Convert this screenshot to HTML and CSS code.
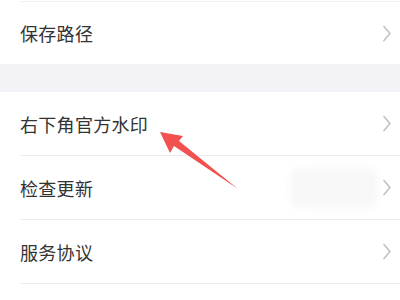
FILE: index.html
```html
<!DOCTYPE html>
<html lang="zh-CN">
<head>
<meta charset="utf-8">
<link rel="stylesheet" href="styles.css">
</head>
<body>
<div class="page">
  <div class="group first">
    <div class="row">
      <span class="label">保存路径</span>
      <svg class="chev" width="10" height="17" viewBox="0 0 10 17"><path d="M2 1.5 L8 8.5 L2 15.5" fill="none" stroke="#c4c4c4" stroke-width="1.7" stroke-linecap="round" stroke-linejoin="round"/></svg>
    </div>
  </div>
  <div class="band"></div>
  <div class="group">
    <div class="row bordered">
      <span class="label">右下角官方水印</span>
      <svg class="chev" width="10" height="17" viewBox="0 0 10 17"><path d="M2 1.5 L8 8.5 L2 15.5" fill="none" stroke="#c4c4c4" stroke-width="1.7" stroke-linecap="round" stroke-linejoin="round"/></svg>
    </div>
    <div class="row bordered">
      <span class="label">检查更新</span>
      <span class="blur"></span>
      <svg class="chev" width="10" height="17" viewBox="0 0 10 17"><path d="M2 1.5 L8 8.5 L2 15.5" fill="none" stroke="#c4c4c4" stroke-width="1.7" stroke-linecap="round" stroke-linejoin="round"/></svg>
    </div>
    <div class="row bordered">
      <span class="label">服务协议</span>
      <svg class="chev" width="10" height="17" viewBox="0 0 10 17"><path d="M2 1.5 L8 8.5 L2 15.5" fill="none" stroke="#c4c4c4" stroke-width="1.7" stroke-linecap="round" stroke-linejoin="round"/></svg>
    </div>
  </div>
  <svg class="arrow" width="400" height="300" viewBox="0 0 400 300"><polygon points="160,132 183,136 179,141 238,189 174,146 170,153" fill="#f2514f"/></svg>
</div>
</body>
</html>
```
FILE: styles.css
```css
html, body {
  margin: 0;
  padding: 0;
  background: #ffffff;
}
.page {
  position: relative;
  width: 400px;
  height: 300px;
  overflow: hidden;
  font-family: "Noto Sans CJK SC", "Noto Sans", sans-serif;
  color: #333333;
}
.group.first {
  padding-top: 1px;
}
.group.first .row {
  border-top: 1px solid #efeff1;
  height: 62px;
  box-sizing: content-box;
}
.row {
  display: flex;
  align-items: center;
  height: 63px;
  margin-left: 20px;
  padding-right: 8px;
  position: relative;
}
.row.bordered {
  border-bottom: 1px solid #ececee;
}
.label {
  flex: 1;
  font-size: 18px;
  line-height: 24px;
  letter-spacing: 0.3px;
}
.chev {
  display: block;
}
.blur {
  width: 88px;
  height: 42px;
  margin-right: 4px;
  border-radius: 10px;
  background: #f8f8f8;
  filter: blur(3px);
}
.band {
  height: 28px;
  background: #f3f3f7;
}
.arrow {
  position: absolute;
  left: 0;
  top: 0;
  pointer-events: none;
}
```
